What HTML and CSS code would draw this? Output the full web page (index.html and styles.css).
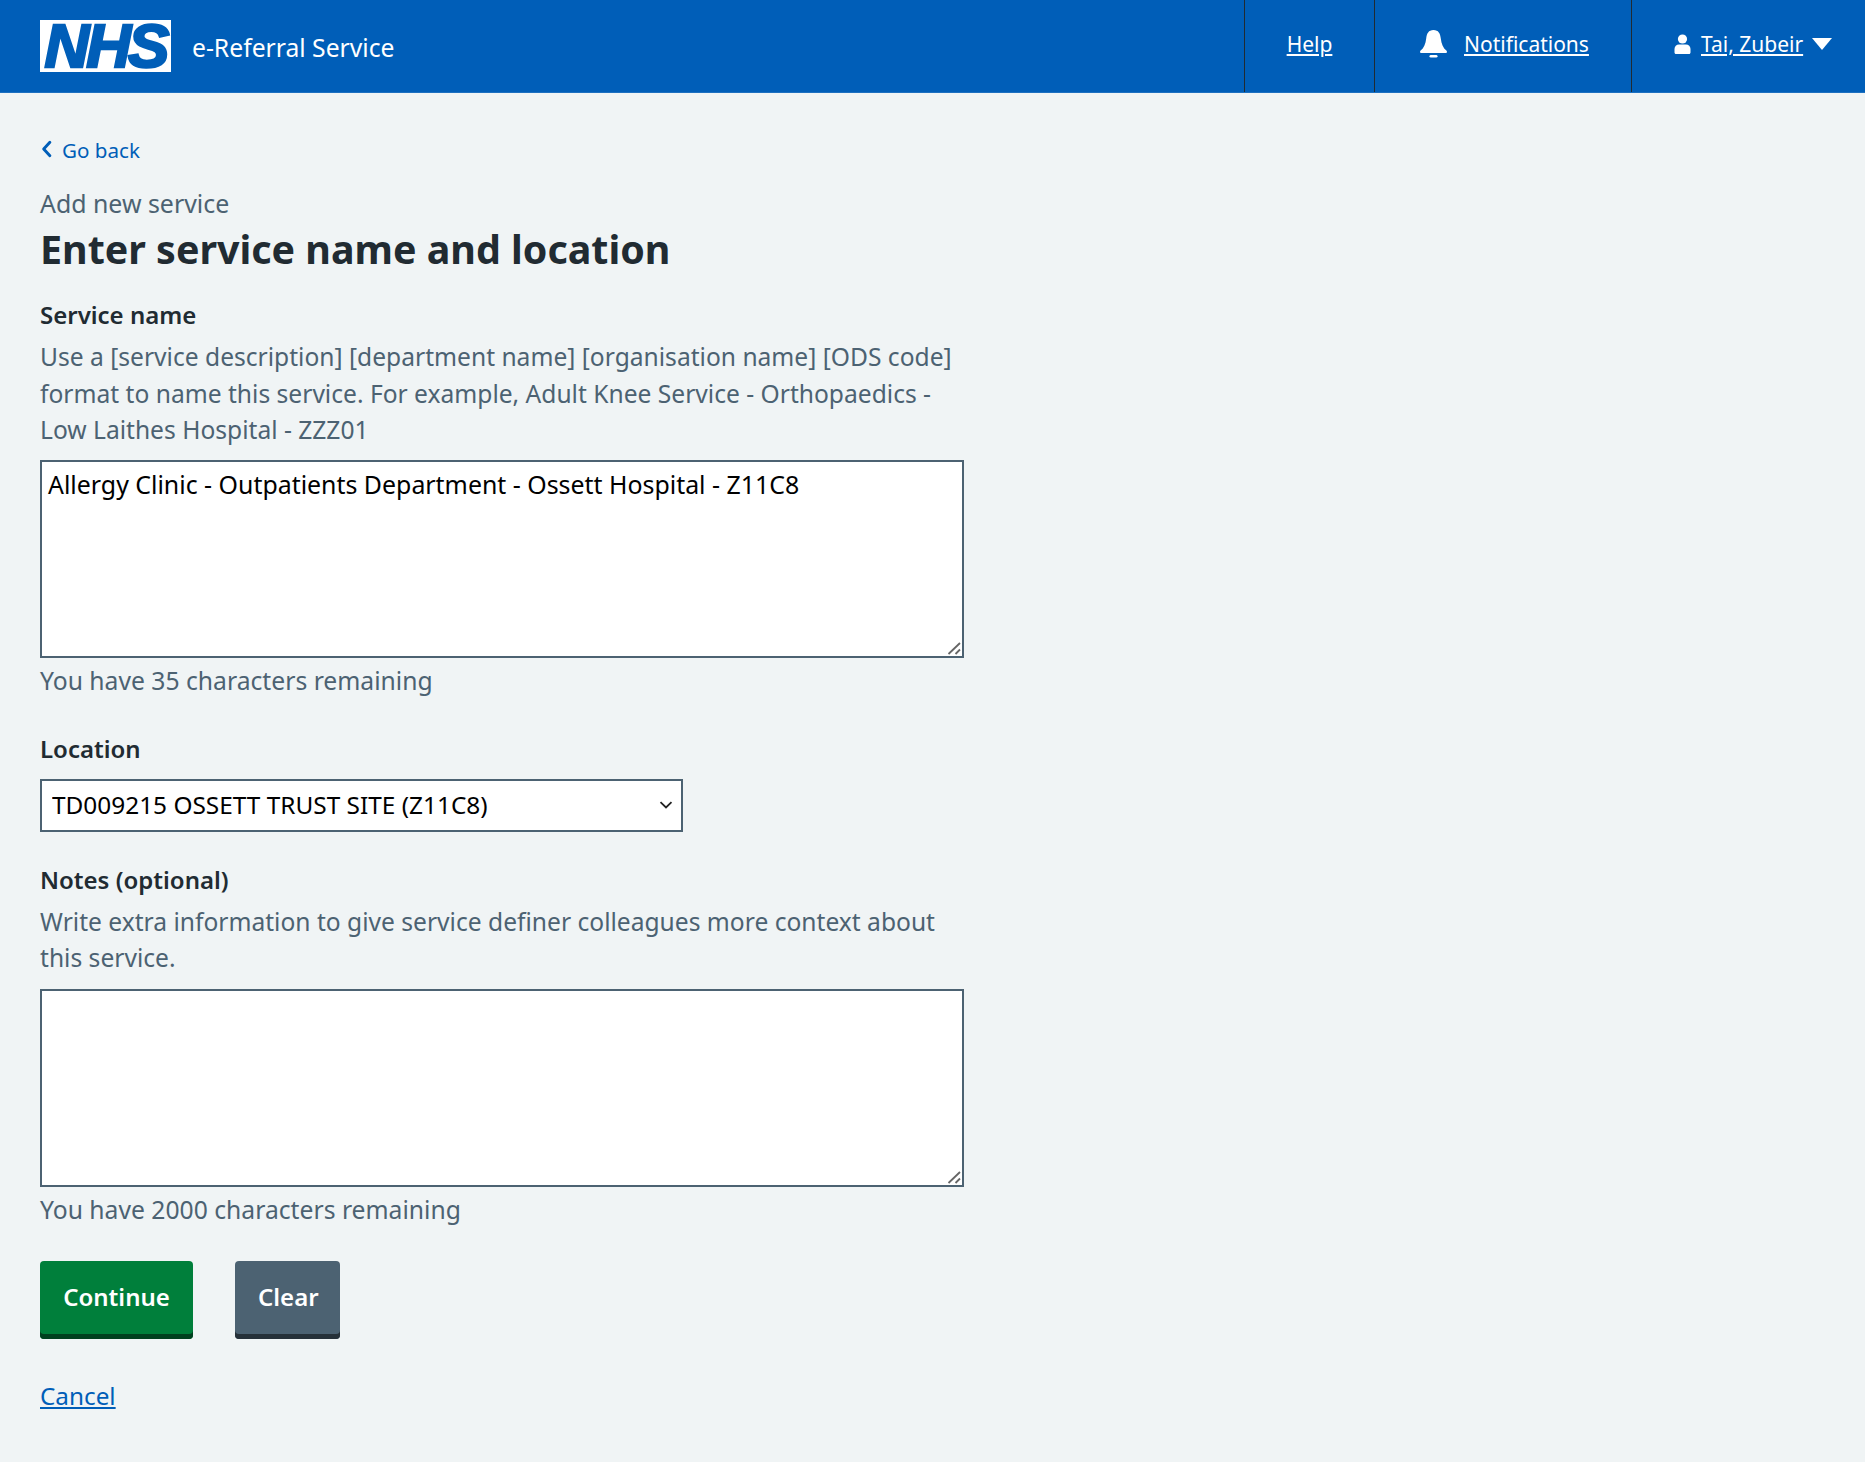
FILE: index.html
```html
<!DOCTYPE html>
<html lang="en">
<head>
    <meta charset="UTF-8">
    <meta name="viewport" content="width=device-width, initial-scale=1.0">
    <title>Enter service name and location</title>
    <link rel="stylesheet" href="styles.css">
</head>
<body>

<header class="site-header">
    <div class="brand">
        <span class="nhs-logo">NHS</span>
        <span class="service-name">e-Referral Service</span>
    </div>
    <nav class="header-nav">
        <div class="nav-item nav-help"><a href="#">Help</a></div>
        <div class="nav-item nav-notifications">
            <svg class="icon-bell" viewBox="0 0 27 28" aria-hidden="true">
                <path d="M13.500 0C8.500 0 6.800 3.500 6.200 8.500 5.600 13.500 4 18 .4 20.800c-.6.500-.4 2.200.6 2.200h25c1 0 1.200-1.700.6-2.200C23 18 21.400 13.500 20.800 8.500 20.200 3.500 18.500 0 13.500 0z"/>
                <rect x="9.500" y="25" width="8" height="2.600" rx="1.300"/>
            </svg>
            <a href="#">Notifications</a>
        </div>
        <div class="nav-item nav-user">
            <svg class="icon-user" viewBox="0 0 16 20" aria-hidden="true">
                <circle cx="8" cy="5" r="4.600"/>
                <path d="M1.500 20C.6 20 0 19.400 0 18.500v-3.500C0 12.500 2 10.500 4.500 10.500h7c2.500 0 4.500 2 4.500 4.500v3.500c0 .9-.6 1.500-1.500 1.500z"/>
            </svg>
            <a href="#">Tai, Zubeir</a>
            <svg class="icon-caret" viewBox="0 0 20 12" aria-hidden="true"><path d="M0 0h20L10 12z"/></svg>
        </div>
    </nav>
</header>

<main class="page">
    <a class="back-link" href="#">
        <svg viewBox="0 0 10 16" aria-hidden="true"><path d="M8 2L2.500 8 8 14" fill="none" stroke="currentColor" stroke-width="2.600" stroke-linecap="round" stroke-linejoin="round"/></svg>
        Go back
    </a>

    <span class="caption">Add new service</span>
    <h1>Enter service name and location</h1>

    <form class="service-form">
        <div class="form-group group-name">
            <label for="service-name">Service name</label>
            <p class="hint">Use a [service description] [department name] [organisation name] [ODS code] format to name this service. For example, Adult Knee Service - Orthopaedics - Low Laithes Hospital - ZZZ01</p>
            <div class="textarea-wrap">
                <textarea id="service-name">Allergy Clinic - Outpatients Department - Ossett Hospital - Z11C8</textarea>
                <svg class="resize-grip" viewBox="0 0 14 14" aria-hidden="true"><path d="M1.500 13L13 2M8.500 13L13 8.500"/></svg>
            </div>
            <p class="count">You have 35 characters remaining</p>
        </div>

        <div class="form-group group-location">
            <label for="location">Location</label>
            <select id="location">
                <option>TD009215 OSSETT TRUST SITE (Z11C8)</option>
            </select>
        </div>

        <div class="form-group group-notes">
            <label for="notes">Notes (optional)</label>
            <p class="hint">Write extra information to give service definer colleagues more context about this service.</p>
            <div class="textarea-wrap">
                <textarea id="notes"></textarea>
                <svg class="resize-grip" viewBox="0 0 14 14" aria-hidden="true"><path d="M1.500 13L13 2M8.500 13L13 8.500"/></svg>
            </div>
            <p class="count">You have 2000 characters remaining</p>
        </div>

        <div class="button-row">
            <button type="button" class="btn btn-continue">Continue</button>
            <button type="button" class="btn btn-clear">Clear</button>
        </div>
    </form>

    <a class="cancel-link" href="#">Cancel</a>
</main>

</body>
</html>
```

FILE: styles.css
```css
* {
    box-sizing: border-box;
}
html, body {
    margin: 0;
    padding: 0;
}
body {
    font-family: "Noto Sans", "Open Sans", Arial, sans-serif;
    font-size: 24px;
    line-height: 36px;
    color: #212b32;
    background-color: #f0f4f5;
    min-height: 1460px;
}

/* header */
.site-header {
    display: flex;
    justify-content: space-between;
    height: 93px;
    background-color: #005eb8;
    color: #fff;
    border-bottom: 1px solid #1d70c0;
}
.brand {
    display: flex;
    align-items: center;
    padding-left: 40px;
}
.nhs-logo {
    display: block;
    width: 131px;
    height: 52px;
    background-color: #fff;
    color: #005eb8;
    font-family: "Liberation Sans", Arial, sans-serif;
    font-size: 62px;
    font-weight: 700;
    font-style: italic;
    line-height: 52px;
    letter-spacing: -3px;
    text-align: center;
    -webkit-text-stroke: 2.500px #005eb8;
}
.service-name {
    margin-left: 21px;
    padding-top: 4px;
    font-size: 24.700px;
}
.header-nav {
    display: flex;
}
.nav-item {
    display: flex;
    align-items: center;
    padding-bottom: 5px;
    border-left: 1px solid #212b32;
    font-size: 21px;
}
.nav-item a {
    color: #fff;
}
.nav-help {
    width: 130px;
    justify-content: center;
}
.nav-notifications {
    width: 257px;
    padding-left: 45px;
    gap: 17px;
}
.nav-user {
    width: 234px;
    padding-left: 42px;
    gap: 10px;
}
.icon-bell {
    width: 27px;
    height: 28px;
    fill: #fff;
}
.icon-user {
    width: 17px;
    height: 20px;
    fill: #fff;
}
.icon-caret {
    width: 20px;
    height: 12px;
    margin-left: -1px;
    fill: #fff;
}

/* page */
.page {
    padding: 42px 40px 0;
}
.back-link {
    display: flex;
    align-items: center;
    gap: 9px;
    width: max-content;
    color: #005eb8;
    font-size: 20.600px;
    line-height: 30px;
    text-decoration: none;
}
.back-link svg {
    width: 13px;
    height: 18px;
    margin-top: -2px;
    color: #005eb8;
}
.caption {
    display: block;
    margin-top: 22px;
    color: #4c6272;
    font-size: 24.900px;
    line-height: 32px;
}
h1 {
    margin: 5px 0 23px;
    font-size: 39.400px;
    line-height: 50px;
    font-weight: 700;
}

/* form */
.form-group {
    width: 924px;
}
.group-name {
    margin-bottom: 32px;
}
.group-location {
    margin-bottom: 30px;
}
.group-notes {
    margin-bottom: 33px;
}
.group-notes .hint {
    margin-bottom: 12px;
}
label {
    display: block;
    font-weight: 600;
    font-size: 24px;
    line-height: 36px;
}
.hint {
    margin: 6px 0 11px;
    color: #4c6272;
    font-size: 24.600px;
    line-height: 36.500px;
}
.textarea-wrap {
    position: relative;
}
textarea {
    display: block;
    width: 924px;
    height: 198px;
    padding: 4px 6px;
    border: 2px solid #4c6272;
    border-radius: 0;
    background-color: #fff;
    color: #000;
    font-family: inherit;
    font-size: 24.900px;
    line-height: 36px;
    resize: none;
}
.resize-grip {
    position: absolute;
    right: 3px;
    bottom: 3px;
    width: 14px;
    height: 14px;
    fill: none;
    stroke: #666;
    stroke-width: 1.800;
    pointer-events: none;
}
select {
    display: block;
    width: 643px;
    height: 53px;
    margin-top: 12px;
    padding: 0 6px 2px 10px;
    border: 2px solid #4c6272;
    border-radius: 0;
    background-color: #fff;
    background-image: url("data:image/svg+xml,%3Csvg xmlns='http://www.w3.org/2000/svg' viewBox='0 0 14 8'%3E%3Cpath d='M1.500 1.200L7 6.500l5.500-5.300' fill='none' stroke='%23222' stroke-width='1.800'/%3E%3C/svg%3E");
    background-repeat: no-repeat;
    background-position: right 8px center;
    background-size: 14px 8px;
    color: #000;
    font-family: inherit;
    font-size: 24.400px;
    appearance: none;
}
.count {
    margin: 5px 0 0;
    color: #4c6272;
    font-size: 24.700px;
    line-height: 36px;
}
.button-row {
    display: flex;
    gap: 42px;
}
.btn {
    height: 78px;
    padding: 0 23px 6px;
    border: none;
    border-radius: 4px;
    color: #fff;
    font-family: inherit;
    font-size: 24px;
    font-weight: 600;
    cursor: pointer;
}
.btn-continue {
    width: 153px;
    background-color: #007f3b;
    box-shadow: inset 0 -5px 0 #00401e;
}
.btn-clear {
    width: 105px;
    background-color: #4c6272;
    box-shadow: inset 0 -5px 0 #263139;
}
.cancel-link {
    display: block;
    width: max-content;
    margin-top: 39px;
    color: #005eb8;
    font-size: 24.300px;
    line-height: 36px;
}
```
